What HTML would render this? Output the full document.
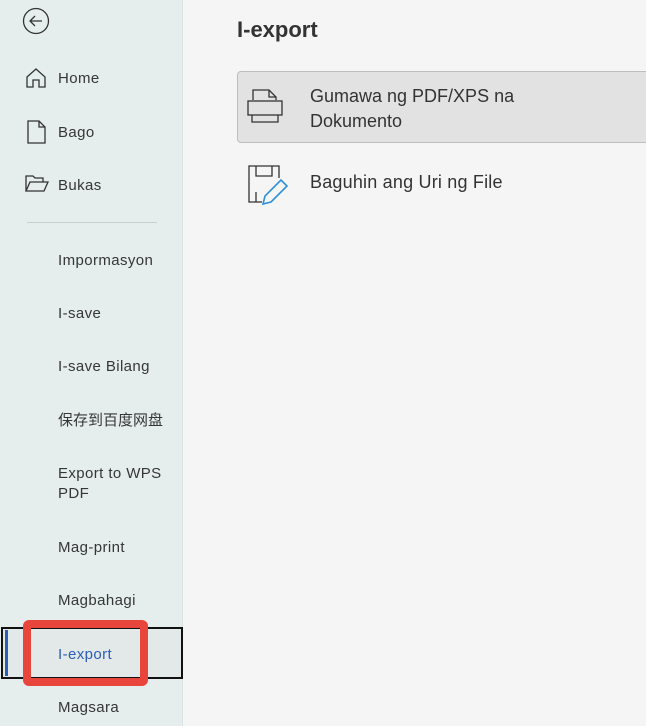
<!DOCTYPE html>
<html><head><meta charset="utf-8"><style>
*{margin:0;padding:0;box-sizing:border-box}
body{width:646px;height:726px;overflow:hidden;background:#f5f5f5;font-family:"Liberation Sans","Noto Sans CJK SC",sans-serif;color:#333;position:relative}
#side{position:absolute;left:0;top:0;width:183px;height:726px;background:#e5eded;border-right:1px solid #dde3e3}
.t{position:absolute;font-size:15px;color:#363636;white-space:nowrap;letter-spacing:0.4px}
.ic{position:absolute}
h1{position:absolute;left:237px;top:17px;font-size:22px;font-weight:bold;color:#333}
</style></head><body>
<div id="side">
<svg class="ic" style="left:22px;top:7px" width="28" height="28" viewBox="0 0 28 28"><circle cx="14" cy="14" r="12.5" fill="none" stroke="#333" stroke-width="1.3"/><path d="M20 14H8M13 9l-5 5 5 5" fill="none" stroke="#333" stroke-width="1.3"/></svg>
<svg class="ic" style="left:25px;top:67px" width="22" height="22" viewBox="0 0 22 22"><path d="M2 10L11 2l9 8v10h-6v-7H8v7H2z" fill="none" stroke="#333" stroke-width="1.3"/></svg>
<div class="t" style="left:58px;top:70px">Home</div>
<svg class="ic" style="left:27px;top:120px" width="20" height="24" viewBox="0 0 20 24"><path d="M1 1h11l6 6v16H1z M12 1v6h6" fill="none" stroke="#333" stroke-width="1.3"/></svg>
<div class="t" style="left:58px;top:124px">Bago</div>
<svg class="ic" style="left:25px;top:175px" width="24" height="18" viewBox="0 0 24 18"><path d="M1 16V1h7l2 2h8v4 M1 16L5 7h18l-4 9z" fill="none" stroke="#333" stroke-width="1.3"/></svg>
<div class="t" style="left:58px;top:177px">Bukas</div>
<div style="position:absolute;left:27px;top:222px;width:130px;height:1px;background:#c8cece"></div>
<div class="t" style="left:58px;top:252px">Impormasyon</div>
<div class="t" style="left:58px;top:305px">I-save</div>
<div class="t" style="left:58px;top:358px">I-save Bilang</div>
<div class="t" style="left:58px;top:409px;letter-spacing:0">保存到百度网盘</div>
<div class="t" style="left:58px;top:464px;line-height:20px">Export to WPS<br>PDF</div>
<div class="t" style="left:58px;top:539px">Mag-print</div>
<div class="t" style="left:58px;top:592px">Magbahagi</div>
<div style="position:absolute;left:1px;top:627px;width:182px;height:52px;border:2px solid #111;background:#e3e8e8"></div>
<div style="position:absolute;left:5px;top:630px;width:3px;height:46px;background:#2b5eb5"></div>
<div class="t" style="left:58px;top:646px;color:#2b5eb5">I-export</div>
<div style="position:absolute;left:23px;top:620px;width:125px;height:66px;border:8px solid #e8453c;border-radius:6px"></div>
<div class="t" style="left:58px;top:699px">Magsara</div>
</div>
<h1>I-export</h1>
<div style="position:absolute;left:237px;top:71px;width:420px;height:72px;background:#e2e2e2;border:1px solid #bdbdbd;border-radius:4px"></div>
<svg class="ic" style="left:246px;top:88px" width="38" height="40" viewBox="0 0 38 40"><path d="M7 12V2h16l7 7v3 M23 2v7h7" fill="none" stroke="#333" stroke-width="1.3"/><rect x="2" y="13" width="34" height="14" fill="none" stroke="#333" stroke-width="1.3"/><path d="M6 27v7h26v-7" fill="none" stroke="#333" stroke-width="1.3"/></svg>
<div class="t" style="left:310px;top:84px;font-size:18px;line-height:25px;color:#333;letter-spacing:0">Gumawa ng PDF/XPS na<br>Dokumento</div>
<svg class="ic" style="left:245px;top:164px" width="44" height="44" viewBox="0 0 44 44"><path d="M17 38H4V2h30v12 M11 2v10h16V2 M11 38V28" fill="none" stroke="#333" stroke-width="1.3"/><path d="M18 40l2-8 16-16 6 6-16 16z" fill="none" stroke="#2f8fd8" stroke-width="1.6"/></svg>
<div class="t" style="left:310px;top:172px;font-size:18px;color:#333;letter-spacing:0.2px">Baguhin ang Uri ng File</div>
</body></html>
